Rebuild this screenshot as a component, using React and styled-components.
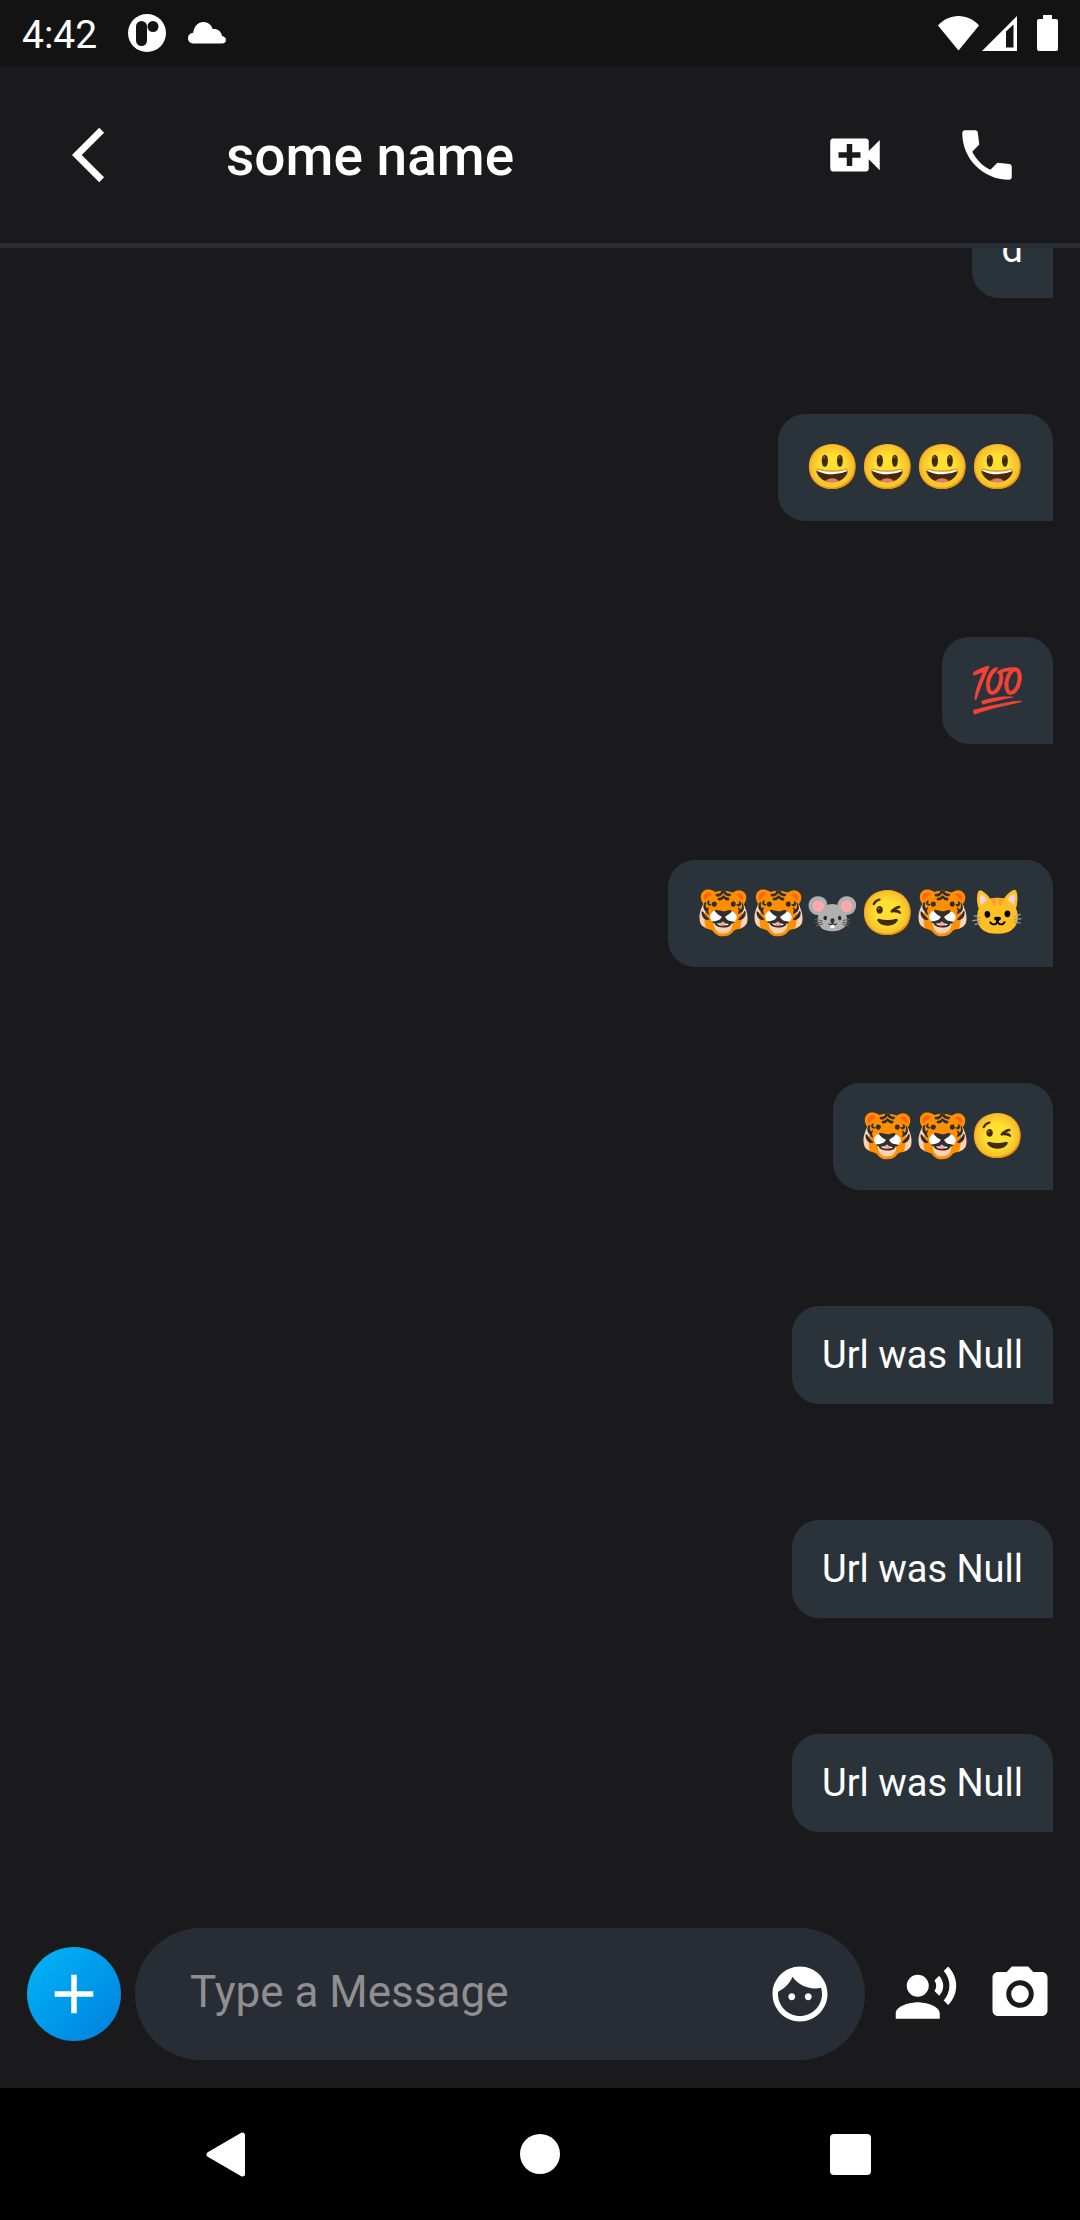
import React from "react";
import styled, { createGlobalStyle } from "styled-components";

const GlobalStyle = createGlobalStyle`
  *, *::before, *::after { box-sizing: border-box; }
  body { margin: 0; background: #1a1a1c; }
  button { font: inherit; color: inherit; }
`;

const Screen = styled.div`
  display: flex;
  flex-direction: column;
  height: 100vh;
  background: #1a1a1c;
  color: #fff;
  font-family: Roboto, "Noto Color Emoji", sans-serif;
`;

const StatusBar = styled.div`
  flex: none;
  display: flex;
  align-items: center;
  justify-content: space-between;
  height: 66px;
  padding: 0 21px 0 22px;
  background: #131313;
  font-size: 39px;
  line-height: 46px;
`;

const StatusGroup = styled.div`
  display: flex;
  align-items: center;
  gap: ${(p) => p.$gap}px;
`;

const Clock = styled.time`
  margin-right: 9px;
  padding-top: 4px;
`;

const Header = styled.header`
  flex: none;
  display: flex;
  align-items: center;
  height: 182px;
  padding: 0 60px 0 72px;
  border-bottom: 5px solid #282c35;
`;

const Title = styled.h1`
  flex: 1;
  margin: 0 0 0 88px;
  padding-top: 2px;
  font-size: 55px;
  font-weight: 500;
  line-height: 64px;
`;

const IconButton = styled.button`
  display: flex;
  flex: none;
  padding: 0;
  border: 0;
  background: none;
  cursor: pointer;
`;

const HeaderActions = styled.div`
  display: flex;
  gap: 66px;
`;

const Messages = styled.ol`
  flex: 1;
  min-height: 0;
  display: flex;
  flex-direction: column;
  align-items: flex-end;
  justify-content: flex-end;
  gap: 116px;
  margin: 0;
  padding: 0 27px 96px;
  overflow: hidden;
  list-style: none;
`;

const Bubble = styled.li`
  flex: none;
  padding: 27px ${(p) => (p.$emoji ? 28 : 30)}px;
  border-radius: 27px 27px 0 27px;
  background: #2b333a;
  font-size: ${(p) => (p.$emoji ? 44 : 38)}px;
  line-height: ${(p) => (p.$emoji ? 53 : 44)}px;
`;

const Composer = styled.form`
  flex: none;
  display: flex;
  align-items: center;
  padding: 0 27px 28px;
`;

const AddButton = styled(IconButton)`
  align-items: center;
  justify-content: center;
  width: 94px;
  height: 94px;
  margin-right: 14px;
  border-radius: 50%;
  background: linear-gradient(135deg, #00b4f5 5%, #0084e0 90%);
`;

const Field = styled.div`
  flex: 1;
  min-width: 0;
  display: flex;
  align-items: center;
  height: 132px;
  margin-right: 28px;
  padding: 0 32px 0 55px;
  border-radius: 66px;
  background: #282c35;
`;

const Input = styled.input`
  flex: 1;
  min-width: 0;
  padding: 0 0 4px;
  border: 0;
  outline: 0;
  background: none;
  color: #fff;
  font-family: inherit;
  font-size: 44px;
  line-height: 52px;
  &::placeholder { color: #8f8f8f; opacity: 1; }
`;

const ComposerActions = styled.div`
  display: flex;
  gap: 28px;
`;

const NavBar = styled.nav`
  flex: none;
  display: flex;
  align-items: center;
  justify-content: center;
  gap: 244px;
  height: 132px;
  background: #000;
`;

const paths = {
  back: "M11.67 3.87L9.9 2.1 0 12l9.9 9.9 1.77-1.77L3.54 12z",
  video:
    "M17 10.5V7c0-.55-.45-1-1-1H4c-.55 0-1 .45-1 1v10c0 .55.45 1 1 1h12c.55 0 1-.45 1-1v-3.5l4 4v-11l-4 4zM14 13h-3v3H9v-3H6v-2h3V8h2v3h3v2z",
  phone:
    "M4 3H7.700C8.300 3 8.600 3.400 8.650 3.900L9.200 8.200L6.620 10.790C8.060 13.620 10.380 15.930 13.210 17.380L15.800 14.850L20.100 15.300C20.600 15.350 21 15.750 21 16.300V20C21 20.600 20.600 21 20 21C10.610 21 3 13.390 3 4C3 3.450 3.450 3 4 3z",
  add: "M19 13h-6v6h-2v-6H5v-2h6V5h2v6h6v2z",
  face: "M9 11.75c-.69 0-1.25.56-1.25 1.25s.56 1.25 1.25 1.25 1.25-.56 1.25-1.25-.56-1.25-1.25-1.25zm6 0c-.69 0-1.25.56-1.25 1.25s.56 1.25 1.25 1.25 1.25-.56 1.25-1.25-.56-1.25-1.25-1.25zM12 2C6.48 2 2 6.48 2 12s4.48 10 10 10 10-4.48 10-10S17.52 2 12 2zm0 18c-4.41 0-8-3.59-8-8 0-.29.02-.58.05-.86 2.36-1.05 4.23-2.98 5.21-5.37C11.07 8.33 14.05 10 17.42 10c.78 0 1.53-.09 2.25-.26.21.71.33 1.47.33 2.26 0 4.41-3.59 8-8 8z",
  voice:
    "M9 5a4 4 0 1 0 0 8a4 4 0 1 0 0-8zM9 15c-2.67 0-8 1.34-8 4v2h16v-2c0-2.66-5.33-4-8-4zm7.76-9.64l-1.68 1.69c.84 1.18.84 2.71 0 3.89l1.68 1.69c2.02-2.02 2.02-5.07 0-7.27zM20.07 2l-1.63 1.63c2.77 3.02 2.77 7.56 0 10.74L20.07 16c3.9-3.89 3.91-9.95 0-14z",
  camera:
    "M12 8.8a3.2 3.2 0 1 0 0 6.4a3.2 3.2 0 1 0 0-6.4zM9 2L7.17 4H4c-1.1 0-2 .9-2 2v12c0 1.1.9 2 2 2h16c1.1 0 2-.9 2-2V6c0-1.1-.9-2-2-2h-3.17L15 2H9zm3 15c-2.76 0-5-2.24-5-5s2.24-5 5-5 5 2.24 5 5-2.24 5-5 5z",
};

function Icon({ name }) {
  return (
    <svg width="66" height="66" viewBox="0 0 24 24" fill="#fff" aria-hidden="true">
      <path d={paths[name]} />
    </svg>
  );
}

const messages = [
  { text: "d" },
  { text: "😃😃😃😃", emoji: true },
  { text: "💯", emoji: true },
  { text: "🐯🐯🐭😉🐯🐱", emoji: true },
  { text: "🐯🐯😉", emoji: true },
  { text: "Url was Null" },
  { text: "Url was Null" },
  { text: "Url was Null" },
];

export default function App() {
  return (
    <Screen>
      <GlobalStyle />
      <StatusBar>
        <StatusGroup $gap={22}>
          <Clock>4:42</Clock>
          <svg width="38" height="38" viewBox="0 0 38 38" aria-hidden="true">
            <circle cx="19" cy="19" r="19" fill="#fff" />
            <rect x="8" y="7" width="11" height="25" rx="5.5" fill="#131313" />
            <circle cx="25" cy="12.5" r="5.5" fill="#131313" />
          </svg>
          <svg width="38" height="22" viewBox="0 0 38 22" fill="#fff" aria-hidden="true">
            <path d="M5 21.500a5 5 0 0 1-5-5.500c0-3 2-5 5.200-5.300C6 4.500 10 0 15.500 0c4.500 0 8 3 9.300 7.200c4.700-.6 8.200 2 9.200 6.800c2.500.4 4 2 4 4c0 2.200-1.600 3.500-4 3.500z" />
          </svg>
        </StatusGroup>
        <StatusGroup $gap={3}>
          <svg width="41" height="35" viewBox="0 0 41 35" fill="#fff" aria-hidden="true">
            <path d="M0 9.500C5.500 3.500 12.500 0 20.500 0S35.500 3.500 41 9.500L20.500 34.500z" />
          </svg>
          <svg width="35" height="35" viewBox="0 0 35 35" fill="#fff" fillRule="evenodd" aria-hidden="true">
            <path d="M35 0V35H0zM31.500 8.500L24 15.500V31.500H31.500z" />
          </svg>
          <svg width="39" height="36" viewBox="0 0 39 36" fill="#fff" aria-hidden="true">
            <path d="M17 6a2 2 0 0 1 2-2h4V0h9v4h4a2 2 0 0 1 2 2V34a2 2 0 0 1-2 2H19a2 2 0 0 1-2-2z" />
          </svg>
        </StatusGroup>
      </StatusBar>
      <Header>
        <IconButton type="button" aria-label="Back">
          <Icon name="back" />
        </IconButton>
        <Title>some name</Title>
        <HeaderActions>
          <IconButton type="button" aria-label="Video call">
            <Icon name="video" />
          </IconButton>
          <IconButton type="button" aria-label="Call">
            <Icon name="phone" />
          </IconButton>
        </HeaderActions>
      </Header>
      <Messages>
        {messages.map((m, i) => (
          <Bubble key={i} $emoji={m.emoji}>
            {m.text}
          </Bubble>
        ))}
      </Messages>
      <Composer onSubmit={(e) => e.preventDefault()}>
        <AddButton type="button" aria-label="Add attachment">
          <Icon name="add" />
        </AddButton>
        <Field>
          <Input type="text" aria-label="Message" placeholder="Type a Message" />
          <IconButton type="button" aria-label="Emoji">
            <Icon name="face" />
          </IconButton>
        </Field>
        <ComposerActions>
          <IconButton type="button" aria-label="Record voice">
            <Icon name="voice" />
          </IconButton>
          <IconButton type="button" aria-label="Camera">
            <Icon name="camera" />
          </IconButton>
        </ComposerActions>
      </Composer>
      <NavBar>
        <IconButton type="button" aria-label="System back">
          <svg width="66" height="66" viewBox="0 0 66 66" aria-hidden="true">
            <path d="M12 33.500L45.500 14V53z" fill="#fff" stroke="#fff" strokeWidth="5" strokeLinejoin="round" />
          </svg>
        </IconButton>
        <IconButton type="button" aria-label="Home">
          <svg width="66" height="66" viewBox="0 0 66 66" aria-hidden="true">
            <circle cx="33" cy="33" r="20" fill="#fff" />
          </svg>
        </IconButton>
        <IconButton type="button" aria-label="Recent apps">
          <svg width="66" height="66" viewBox="0 0 66 66" aria-hidden="true">
            <rect x="13" y="13" width="41" height="41" rx="4" fill="#fff" />
          </svg>
        </IconButton>
      </NavBar>
    </Screen>
  );
}
